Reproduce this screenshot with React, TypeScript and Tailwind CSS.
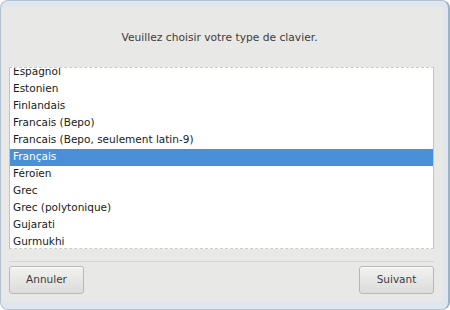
const layouts = [
  "Espagnol",
  "Estonien",
  "Finlandais",
  "Francais (Bepo)",
  "Francais (Bepo, seulement latin-9)",
  "Français",
  "Féroïen",
  "Grec",
  "Grec (polytonique)",
  "Gujarati",
  "Gurmukhi",
];

const selected = "Français";

export default function App() {
  return (
    <div className="w-[450px] h-[310px] bg-white font-['DejaVu_Sans',sans-serif] text-[10.5px]">
      <div className="h-full rounded-[8px] border border-[#b4c3d2] border-r-[#9fb2c4] border-r-2 bg-[#dfe6ee] pt-[6px] pl-[1px] pr-[5px] pb-[7px]">
        <div className="h-full bg-[#e8e8e7] flex flex-col px-[7px]">
          <div className="h-[60px] flex items-center justify-center pt-[2px] pr-[6px] text-[#3c3c3c] text-[10.7px]">
            Veuillez choisir votre type de clavier.
          </div>
          <div className="h-[182px] w-[425px] bg-white border border-dashed border-[#cacaca] [border-left-style:solid] [border-right-style:solid] border-x-[#c4c4c4] overflow-hidden">
            <div className="-mt-[4px]">
              {layouts.map((name) => (
                <div
                  key={name}
                  className={
                    name === selected
                      ? "h-[17px] leading-[15px] pl-[3px] bg-[#4a90d9] text-white"
                      : "h-[17px] leading-[15px] pl-[3px] text-[#1a1a1a]"
                  }
                >
                  {name}
                </div>
              ))}
            </div>
          </div>
          <div className="mt-[12px] w-[425px] border-t border-[#d4d4d3]" />
          <div className="w-[425px] flex justify-between mt-[4px]">
            <button className="w-[75px] h-[28px] rounded-[3px] border border-[#b8b8b8] bg-gradient-to-b from-[#f2f2f1] to-[#dcdcdb] text-[#3c3c3c] shadow-[0_1px_0_rgba(255,255,255,0.8)_inset]">
              Annuler
            </button>
            <button className="w-[75px] h-[28px] rounded-[3px] border border-[#b8b8b8] bg-gradient-to-b from-[#f2f2f1] to-[#dcdcdb] text-[#3c3c3c] shadow-[0_1px_0_rgba(255,255,255,0.8)_inset]">
              Suivant
            </button>
          </div>
        </div>
      </div>
    </div>
  );
}
